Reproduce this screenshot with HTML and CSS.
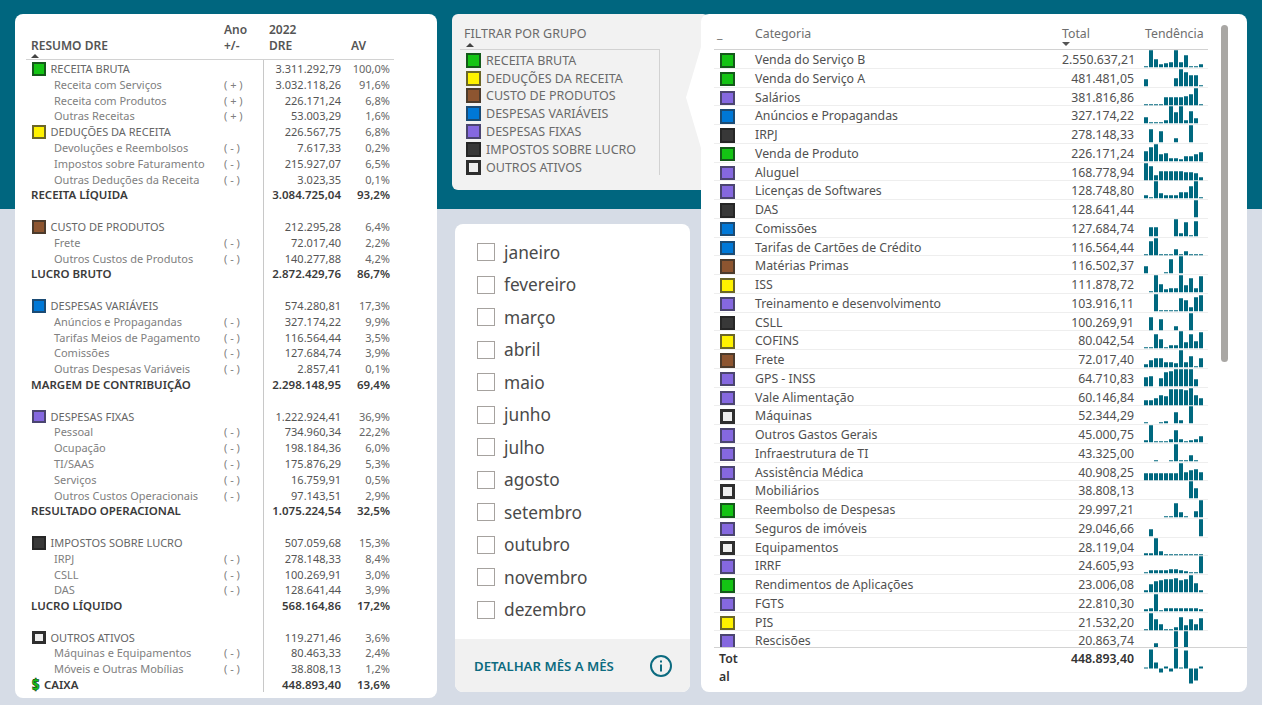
FILE: index.html
```html
<!DOCTYPE html>
<html lang="pt-BR">

<head>
  <meta charset="UTF-8">
  <title>Resumo DRE</title>
  <link rel="stylesheet" href="styles.css">
</head>

<body>
  <div class="page">

    <section class="card dre">
      <div class="dre-head">
        <span class="dre-title">RESUMO DRE</span>
        <span>Ano<br>+/-</span>
        <span class="head-val">2022<br>DRE</span>
        <span class="head-av">AV</span>
      </div>
      <div class="dre-row group"><span class="name"><i class="sw green"></i>RECEITA BRUTA</span><span></span><span class="val">3.311.292,79</span><span class="av">100,0%</span></div>
      <div class="dre-row sub"><span class="name">Receita com Serviços</span><span>( + )</span><span class="val">3.032.118,26</span><span class="av">91,6%</span></div>
      <div class="dre-row sub"><span class="name">Receita com Produtos</span><span>( + )</span><span class="val">226.171,24</span><span class="av">6,8%</span></div>
      <div class="dre-row sub"><span class="name">Outras Receitas</span><span>( + )</span><span class="val">53.003,29</span><span class="av">1,6%</span></div>
      <div class="dre-row group"><span class="name"><i class="sw yellow"></i>DEDUÇÕES DA RECEITA</span><span></span><span class="val">226.567,75</span><span class="av">6,8%</span></div>
      <div class="dre-row sub"><span class="name">Devoluções e Reembolsos</span><span>( - )</span><span class="val">7.617,33</span><span class="av">0,2%</span></div>
      <div class="dre-row sub"><span class="name">Impostos sobre Faturamento</span><span>( - )</span><span class="val">215.927,07</span><span class="av">6,5%</span></div>
      <div class="dre-row sub"><span class="name">Outras Deduções da Receita</span><span>( - )</span><span class="val">3.023,35</span><span class="av">0,1%</span></div>
      <div class="dre-row total"><span class="name">RECEITA LÍQUIDA</span><span></span><span class="val">3.084.725,04</span><span class="av">93,2%</span></div>
      <div class="dre-row"><span></span><span></span><span class="val"></span><span></span></div>
      <div class="dre-row group"><span class="name"><i class="sw brown"></i>CUSTO DE PRODUTOS</span><span></span><span class="val">212.295,28</span><span class="av">6,4%</span></div>
      <div class="dre-row sub"><span class="name">Frete</span><span>( - )</span><span class="val">72.017,40</span><span class="av">2,2%</span></div>
      <div class="dre-row sub"><span class="name">Outros Custos de Produtos</span><span>( - )</span><span class="val">140.277,88</span><span class="av">4,2%</span></div>
      <div class="dre-row total"><span class="name">LUCRO BRUTO</span><span></span><span class="val">2.872.429,76</span><span class="av">86,7%</span></div>
      <div class="dre-row"><span></span><span></span><span class="val"></span><span></span></div>
      <div class="dre-row group"><span class="name"><i class="sw blue"></i>DESPESAS VARIÁVEIS</span><span></span><span class="val">574.280,81</span><span class="av">17,3%</span></div>
      <div class="dre-row sub"><span class="name">Anúncios e Propagandas</span><span>( - )</span><span class="val">327.174,22</span><span class="av">9,9%</span></div>
      <div class="dre-row sub"><span class="name">Tarifas Meios de Pagamento</span><span>( - )</span><span class="val">116.564,44</span><span class="av">3,5%</span></div>
      <div class="dre-row sub"><span class="name">Comissões</span><span>( - )</span><span class="val">127.684,74</span><span class="av">3,9%</span></div>
      <div class="dre-row sub"><span class="name">Outras Despesas Variáveis</span><span>( - )</span><span class="val">2.857,41</span><span class="av">0,1%</span></div>
      <div class="dre-row total"><span class="name">MARGEM DE CONTRIBUIÇÃO</span><span></span><span class="val">2.298.148,95</span><span class="av">69,4%</span></div>
      <div class="dre-row"><span></span><span></span><span class="val"></span><span></span></div>
      <div class="dre-row group"><span class="name"><i class="sw purple"></i>DESPESAS FIXAS</span><span></span><span class="val">1.222.924,41</span><span class="av">36,9%</span></div>
      <div class="dre-row sub"><span class="name">Pessoal</span><span>( - )</span><span class="val">734.960,34</span><span class="av">22,2%</span></div>
      <div class="dre-row sub"><span class="name">Ocupação</span><span>( - )</span><span class="val">198.184,36</span><span class="av">6,0%</span></div>
      <div class="dre-row sub"><span class="name">TI/SAAS</span><span>( - )</span><span class="val">175.876,29</span><span class="av">5,3%</span></div>
      <div class="dre-row sub"><span class="name">Serviços</span><span>( - )</span><span class="val">16.759,91</span><span class="av">0,5%</span></div>
      <div class="dre-row sub"><span class="name">Outros Custos Operacionais</span><span>( - )</span><span class="val">97.143,51</span><span class="av">2,9%</span></div>
      <div class="dre-row total"><span class="name">RESULTADO OPERACIONAL</span><span></span><span class="val">1.075.224,54</span><span class="av">32,5%</span></div>
      <div class="dre-row"><span></span><span></span><span class="val"></span><span></span></div>
      <div class="dre-row group"><span class="name"><i class="sw dark"></i>IMPOSTOS SOBRE LUCRO</span><span></span><span class="val">507.059,68</span><span class="av">15,3%</span></div>
      <div class="dre-row sub"><span class="name">IRPJ</span><span>( - )</span><span class="val">278.148,33</span><span class="av">8,4%</span></div>
      <div class="dre-row sub"><span class="name">CSLL</span><span>( - )</span><span class="val">100.269,91</span><span class="av">3,0%</span></div>
      <div class="dre-row sub"><span class="name">DAS</span><span>( - )</span><span class="val">128.641,44</span><span class="av">3,9%</span></div>
      <div class="dre-row total"><span class="name">LUCRO LÍQUIDO</span><span></span><span class="val">568.164,86</span><span class="av">17,2%</span></div>
      <div class="dre-row"><span></span><span></span><span class="val"></span><span></span></div>
      <div class="dre-row group"><span class="name"><i class="sw hollow"></i>OUTROS ATIVOS</span><span></span><span class="val">119.271,46</span><span class="av">3,6%</span></div>
      <div class="dre-row sub"><span class="name">Máquinas e Equipamentos</span><span>( - )</span><span class="val">80.463,33</span><span class="av">2,4%</span></div>
      <div class="dre-row sub"><span class="name">Móveis e Outras Mobílias</span><span>( - )</span><span class="val">38.808,13</span><span class="av">1,2%</span></div>
      <div class="dre-row total"><span class="name"><b class="cash">$</b>CAIXA</span><span></span><span class="val">448.893,40</span><span class="av">13,6%</span></div>
    </section>

    <div class="middle">
      <section class="filter">
        <div class="filter-title">FILTRAR POR GRUPO</div>
        <ul class="filter-list">
          <li><i class="sw green"></i>RECEITA BRUTA</li>
          <li><i class="sw yellow"></i>DEDUÇÕES DA RECEITA</li>
          <li><i class="sw brown"></i>CUSTO DE PRODUTOS</li>
          <li><i class="sw blue"></i>DESPESAS VARIÁVEIS</li>
          <li><i class="sw purple"></i>DESPESAS FIXAS</li>
          <li><i class="sw dark"></i>IMPOSTOS SOBRE LUCRO</li>
          <li><i class="sw hollow"></i>OUTROS ATIVOS</li>
        </ul>
      </section>

      <section class="card months">
        <ul class="month-list">
          <li><i class="check"></i>janeiro</li>
          <li><i class="check"></i>fevereiro</li>
          <li><i class="check"></i>março</li>
          <li><i class="check"></i>abril</li>
          <li><i class="check"></i>maio</li>
          <li><i class="check"></i>junho</li>
          <li><i class="check"></i>julho</li>
          <li><i class="check"></i>agosto</li>
          <li><i class="check"></i>setembro</li>
          <li><i class="check"></i>outubro</li>
          <li><i class="check"></i>novembro</li>
          <li><i class="check"></i>dezembro</li>
        </ul>
        <div class="months-foot">
          <span>DETALHAR MÊS A MÊS</span>
          <svg class="info" width="24" height="24" viewBox="0 0 24 24" fill="none" stroke="#0c6b80">
            <circle cx="12" cy="12" r="10" stroke-width="2" />
            <path d="M12 10.5v7" stroke-width="2" />
            <path d="M12 6.5v2" stroke-width="2" />
          </svg>
        </div>
      </section>
    </div>

    <section class="card cats">
      <div class="cats-head">
        <span class="cats-blank">_</span>
        <span>Categoria</span>
        <span class="head-total">Total</span>
        <span class="head-trend">Tendência</span>
      </div>
      <div class="cats-rows" id="rows"></div>
      <div class="cats-total">
        <span class="total-label">Total</span>
        <span class="total-val">448.893,40</span>
        <span id="total-spark"></span>
      </div>
      <div class="scrollbar"></div>
    </section>

  </div>

  <script src="script.js"></script>
</body>

</html>
```

FILE: styles.css
```css
* {
  box-sizing: border-box;
}

body {
  margin: 0;
  height: 705px;
  overflow: hidden;
  font-family: 'Noto Sans', 'Open Sans', sans-serif;
  background: linear-gradient(#00667f 0, #00667f 209px, #d6dce6 209px);
}

ul {
  list-style: none;
  margin: 0;
  padding: 0;
}

.page {
  display: flex;
  align-items: flex-start;
  padding: 14px 15px 0;
}

.card {
  background: #fff;
  border-radius: 8px;
}

/* color squares */
.sw {
  display: inline-block;
  flex: none;
  width: 15px;
  height: 15px;
  border: 2px solid;
}

.green { background: #14c414; border-color: #14591a; }
.yellow { background: #fff200; border-color: #6b6628; }
.brown { background: #8d5530; border-color: #4c3b2c; }
.blue { background: #0078d7; border-color: #1b4b74; }
.purple { background: #8568e0; border-color: #4b4570; }
.dark { background: #383838; border-color: #262626; }
.hollow { background: #eee; border-color: #2e2e2e; border-width: 3px; }

/* left table */
.dre {
  width: 422px;
  height: 684px;
  padding: 0 0 0 11px;
  font-size: 11px;
}

.dre-head {
  position: relative;
  display: grid;
  grid-template-columns: 198px 39px 78px 49px;
  align-items: end;
  width: 368px;
  height: 46px;
  padding-bottom: 5px;
  border-bottom: 1.5px solid #d2d2d2;
  font-size: 12px;
  font-weight: 600;
  line-height: 16px;
  color: #555;
}

.dre-title {
  padding-left: 5px;
}

.dre-title::after {
  content: '';
  position: absolute;
  left: 5px;
  bottom: 1px;
  border: 4px solid transparent;
  border-top: 0;
  border-bottom-color: #444;
}

.head-val {
  padding-left: 6px;
}

.head-av {
  padding-left: 10px;
}

.dre-row {
  display: grid;
  grid-template-columns: 198px 39px 78px 49px;
  grid-auto-rows: 15.8px;
  align-items: start;
  height: 15.8px;
  line-height: 17.8px;
  color: #808080;
  white-space: nowrap;
}

.name {
  display: flex;
  align-items: center;
  padding-left: 5px;
}

.group .name {
  color: #666;
}

.group .sw {
  width: 13.5px;
  height: 13.5px;
  margin: 0 5px 0 1px;
}

.sub .name {
  padding-left: 28px;
}

.val {
  align-self: stretch;
  border-left: 1px solid #c8c8c8;
  text-align: right;
  color: #555;
}

.av {
  text-align: right;
  color: #666;
}

.total {
  font-size: 11.5px;
}

.total .name,
.total .val,
.total .av {
  font-weight: 600;
  color: #3a3a3a;
}

.cash {
  display: inline-block;
  width: 7px;
  margin: 0 5px 0 1px;
  font-size: 16px;
  line-height: 15px;
  color: #16c416;
  -webkit-text-stroke: 0.6px #0b2a0b;
  transform: scaleX(0.8);
  transform-origin: left;
}

/* middle column */
.middle {
  flex: none;
  width: 249px;
  margin-left: 15px;
}

.filter {
  width: 257px;
  height: 176px;
  padding: 12px 0 0 8px;
  border-radius: 6px;
  background: #f2f2f2;
  font-size: 12.5px;
  color: #6a6a6a;
}

.filter-title {
  position: relative;
  width: 200px;
  height: 23.5px;
  padding-left: 4px;
  line-height: 15px;
  border-bottom: 1.5px solid #d2d2d2;
}

.filter-title::after {
  content: '';
  position: absolute;
  left: 6px;
  bottom: 2px;
  border: 4px solid transparent;
  border-top: 0;
  border-bottom-color: #444;
}

.filter-list {
  width: 200px;
  height: 125px;
  padding: 2px 0 0 6px;
  border-right: 1.5px solid #d2d2d2;
}

.filter-list li {
  display: flex;
  align-items: center;
  gap: 5px;
  height: 17.8px;
  white-space: nowrap;
}

.months {
  width: 235px;
  height: 468px;
  margin: 34px 0 0 3px;
  overflow: hidden;
}

.month-list {
  height: 415px;
  padding: 12px 0 0 22px;
}

.month-list li {
  display: flex;
  align-items: center;
  gap: 9px;
  height: 32.5px;
  font-size: 17.3px;
  color: #4a4a4a;
}

.check {
  width: 18px;
  height: 18px;
  border: 1.5px solid #a6a29f;
  background: #fff;
}

.months-foot {
  display: flex;
  align-items: center;
  justify-content: space-between;
  height: 53px;
  padding: 0 17px 0 19px;
  background: #f1f1f1;
  font-size: 13.2px;
  font-weight: 600;
  color: #0c6b80;
}

/* right table */
.cats {
  position: relative;
  flex: none;
  width: 546px;
  height: 678px;
  padding-left: 13px;
  font-size: 12.3px;
  color: #505050;
}

/* white arrow pointing at the filter */
.cats::before {
  content: '';
  position: absolute;
  left: -15px;
  top: 33px;
  width: 15px;
  height: 101px;
  background: #fff;
  clip-path: polygon(100% 0, 0 50%, 100% 100%);
}

.cats-head,
.cat-row {
  display: grid;
  grid-template-columns: 41px 307px 72px 74px;
  width: 494px;
}

.cats-head {
  height: 36px;
  padding-top: 12px;
  line-height: 16px;
  color: #6e6e6e;
  border-bottom: 1.5px solid #d2d2d2;
}

.cats-blank {
  padding-left: 3px;
}

.head-total {
  position: relative;
}

.head-total::after {
  content: '';
  position: absolute;
  left: 0;
  top: 16px;
  border: 4.5px solid transparent;
  border-bottom: 0;
  border-top-color: #555;
}

.head-trend {
  padding-left: 11px;
}

.cats-rows {
  height: 597.5px;
  overflow: hidden;
  border-bottom: 1.5px solid #d2d2d2;
}

.cat-row {
  grid-auto-rows: 17.75px;
  align-items: start;
  height: 18.75px;
  line-height: 20.6px;
  border-bottom: 1px solid #eee;
  white-space: nowrap;
}

.cat-row .sw {
  margin: 3px 0 0 6px;
  height: 14.5px;
}

.cat-row .num {
  text-align: right;
}

.spark {
  display: block;
  margin-left: 10px;
  fill: #00687f;
}

.cats-total {
  display: grid;
  grid-template-columns: 348px 72px 74px;
  width: 494px;
  font-weight: 600;
  line-height: 18px;
  color: #333;
}

.total-label {
  width: 28px;
  padding: 2px 0 0 5px;
  word-break: break-all;
}

.total-val {
  padding-top: 2px;
  text-align: right;
  white-space: nowrap;
}

.scrollbar {
  position: absolute;
  left: 520px;
  top: 11px;
  width: 7px;
  height: 337px;
  border-radius: 4px;
  background: #a9a7a4;
}
```

FILE: script.js
```js
// name, group color, total, bar heights in px
const rows = [
  ['Venda do Serviço B', 'green', '2.550.637,21', [1, 17, 8, 3, 4, 5, 17, 5, 12, 1, 1, 3]],
  ['Venda do Serviço A', 'green', '481.481,05', [7, 0, 0, 0, 0, 0, 8, 17, 14, 11, 11, 1]],
  ['Salários', 'purple', '381.816,86', [1, 1, 1, 1, 8, 8, 8, 8, 9, 11, 17, 1]],
  ['Anúncios e Propagandas', 'blue', '327.174,22', [6, 1, 1, 1, 3, 17, 11, 17, 3, 12, 5, 0]],
  ['IRPJ', 'dark', '278.148,33', [0, 13, 0, 11, 0, 0, 4, 0, 0, 17, 0, 0]],
  ['Venda de Produto', 'green', '226.171,24', [10, 14, 17, 7, 8, 3, 3, 2, 5, 5, 7, 9]],
  ['Aluguel', 'purple', '168.778,94', [17, 14, 5, 9, 9, 9, 9, 9, 8, 8, 7, 3]],
  ['Licenças de Softwares', 'purple', '128.748,80', [3, 1, 17, 5, 3, 3, 3, 6, 6, 12, 17, 1]],
  ['DAS', 'dark', '128.641,44', [0, 0, 0, 0, 0, 0, 0, 0, 0, 0, 17, 0]],
  ['Comissões', 'blue', '127.684,74', [0, 9, 9, 0, 0, 0, 17, 3, 14, 1, 15, 0]],
  ['Tarifas de Cartões de Crédito', 'blue', '116.564,44', [1, 14, 17, 1, 1, 1, 6, 1, 4, 1, 1, 1]],
  ['Matérias Primas', 'brown', '116.502,37', [7, 0, 0, 0, 1, 14, 0, 17, 0, 0, 0, 0]],
  ['ISS', 'yellow', '111.878,72', [0, 1, 17, 8, 3, 4, 4, 17, 7, 14, 4, 16]],
  ['Treinamento e desenvolvimento', 'purple', '103.916,11', [0, 0, 17, 1, 1, 1, 1, 13, 11, 4, 14, 16]],
  ['CSLL', 'dark', '100.269,91', [0, 13, 0, 11, 0, 0, 4, 0, 0, 17, 0, 0]],
  ['COFINS', 'yellow', '80.042,54', [1, 1, 14, 9, 1, 3, 3, 17, 6, 14, 7, 16]],
  ['Frete', 'brown', '72.017,40', [3, 7, 9, 9, 5, 5, 4, 17, 5, 11, 1, 9]],
  ['GPS - INSS', 'purple', '64.710,83', [9, 10, 0, 8, 14, 15, 17, 17, 17, 17, 7, 0]],
  ['Vale Alimentação', 'purple', '60.146,84', [5, 5, 7, 10, 9, 16, 16, 16, 15, 17, 10, 7]],
  ['Máquinas', 'hollow', '52.344,29', [1, 0, 0, 1, 2, 0, 11, 3, 0, 17, 0, 0]],
  ['Outros Gastos Gerais', 'purple', '45.000,75', [2, 17, 1, 1, 1, 3, 12, 3, 1, 2, 3, 6]],
  ['Infraestrutura de TI', 'purple', '43.325,00', [0, 0, 1, 0, 0, 1, 17, 1, 1, 6, 1, 0]],
  ['Assistência Médica', 'purple', '40.908,25', [7, 7, 7, 7, 7, 7, 7, 17, 8, 10, 11, 8]],
  ['Mobiliários', 'hollow', '38.808,13', [0, 0, 0, 0, 0, 0, 0, 0, 0, 17, 10, 0]],
  ['Reembolso de Despesas', 'green', '29.997,21', [0, 0, 0, 0, 1, 1, 14, 5, 1, 0, 6, 17]],
  ['Seguros de imóveis', 'purple', '29.046,66', [0, 7, 0, 0, 0, 0, 0, 0, 0, 0, 0, 17]],
  ['Equipamentos', 'hollow', '28.119,04', [2, 2, 17, 4, 1, 1, 1, 1, 1, 1, 1, 1]],
  ['IRRF', 'purple', '24.605,93', [1, 3, 3, 3, 3, 4, 4, 3, 2, 1, 1, 17]],
  ['Rendimentos de Aplicações', 'green', '23.006,08', [2, 8, 11, 12, 13, 13, 14, 12, 13, 17, 9, 2]],
  ['FGTS', 'purple', '22.810,30', [2, 3, 17, 1, 3, 3, 3, 3, 3, 3, 3, 2]],
  ['PIS', 'yellow', '21.532,20', [1, 17, 11, 6, 1, 1, 3, 13, 5, 11, 6, 12]],
  ['Rescisões', 'purple', '20.863,74', [0, 0, 5, 0, 0, 0, 17, 0, 17, 0, 0, 0]]
]

const totalBars = [1, 19, 6, -4, 2, -3, 20, 1, 18, -15, -12, 2]

function spark(bars, height, zero) {
  let rects = ''
  bars.forEach((h, i) => {
    if (h === 0) return
    const y = h > 0 ? zero - h : zero
    rects += `<rect x="${i * 5}" y="${y}" width="4" height="${Math.abs(h)}"></rect>`
  })
  return `<svg class="spark" width="64" height="${height}">${rects}</svg>`
}

document.getElementById('rows').innerHTML = rows.map(r => `
  <div class="cat-row">
    <i class="sw ${r[1]}"></i>
    <span>${r[0]}</span>
    <span class="num">${r[2]}</span>
    ${spark(r[3], 18, 17.25)}
  </div>`).join('')

document.getElementById('total-spark').innerHTML = spark(totalBars, 36, 20.5)
```
